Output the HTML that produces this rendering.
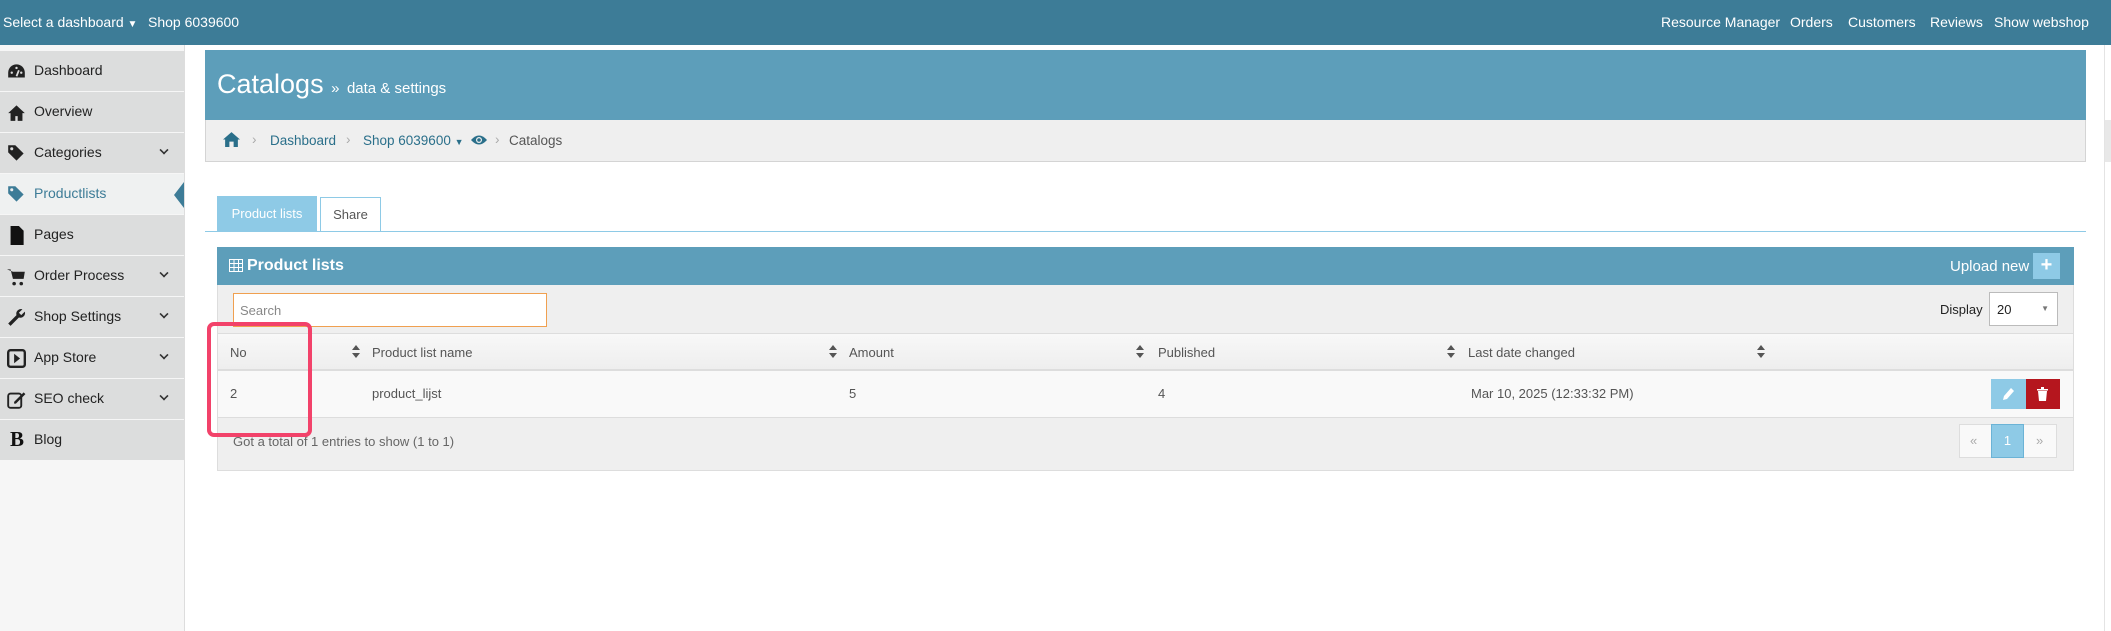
<!DOCTYPE html>
<html><head><meta charset="utf-8"><style>
*{box-sizing:border-box;margin:0;padding:0}
body{width:2111px;height:631px;overflow:hidden;background:#fff;font-family:"Liberation Sans",sans-serif;font-size:13px;color:#555;position:relative}
.abs{position:absolute}
#top{left:0;top:0;width:2111px;height:45px;background:#3d7c97;color:#fff;font-size:14px}
#top span{position:absolute;top:14px}
#side{left:0;top:45px;width:185px;height:586px;background:#f6f6f6;border-right:1px solid #ddd}
.it{position:absolute;left:0;width:184px;height:40px;background:#dcdddd;color:#222;font-size:14px}
.it .t{position:absolute;left:34px;top:11px}
.it .ic{position:absolute;left:7px;top:11px;width:19px;height:19px}
.it .ch{position:absolute;left:160px;top:13px;width:8px;height:8px;border-right:2px solid #333;border-bottom:2px solid #333;transform:rotate(45deg) scale(.8)}
.act{background:#eff1f1;color:#3d7c97}
.th{position:absolute;top:0;height:37px;line-height:37px;color:#555}
.so{position:absolute;top:12px;width:8px;height:13px}
</style></head><body>
<div id="top" class="abs">
<span style="left:3px">Select a dashboard <span style="position:static;font-size:10px">▼</span></span>
<span style="left:148px">Shop 6039600</span>
<span style="left:1661px">Resource Manager</span>
<span style="left:1790px">Orders</span>
<span style="left:1848px">Customers</span>
<span style="left:1930px">Reviews</span>
<span style="left:1994px">Show webshop</span>
</div>
<div id="side" class="abs">
<div class="it" style="top:6px"><svg class="ic" viewBox="0 0 16 16"><path d="M8 2A7 7 0 0 0 1 9v4h14V9A7 7 0 0 0 8 2z" fill="#222"/><circle cx="4" cy="9" r="1" fill="#ddd"/><circle cx="8" cy="5" r="1" fill="#ddd"/><circle cx="12" cy="9" r="1" fill="#ddd"/><path d="M8 12l2-5" stroke="#ddd" stroke-width="1.5"/></svg><span class="t">Dashboard</span></div>
<div class="it" style="top:47px"><svg class="ic" viewBox="0 0 16 16"><path d="M8 2L1 8.5h2V15h4v-4h2v4h4V8.5h2z" fill="#222"/></svg><span class="t">Overview</span></div>
<div class="it" style="top:88px"><svg class="ic" viewBox="0 0 16 16"><path d="M1 1h6l7 7-6 6-7-7z" fill="#222"/><circle cx="4" cy="4" r="1.3" fill="#ddd"/></svg><span class="t">Categories</span><i class="ch"></i></div>
<div class="it act" style="top:129px"><svg class="ic" viewBox="0 0 16 16"><path d="M1 1h6l7 7-6 6-7-7z" fill="#3d7c97"/><circle cx="4" cy="4" r="1.3" fill="#eee"/></svg><span class="t">Productlists</span><div style="position:absolute;right:0;top:8px;width:0;height:0;border-top:13px solid transparent;border-bottom:13px solid transparent;border-right:10px solid #3d7c97"></div></div>
<div class="it" style="top:170px"><svg class="ic" viewBox="0 0 16 16"><path d="M3 0h7l4 4v12H3z" fill="#111"/></svg><span class="t">Pages</span></div>
<div class="it" style="top:211px"><svg class="ic" viewBox="0 0 16 16"><path d="M0 2h3l2 8h9l1-6H5" fill="#222"/><circle cx="6" cy="14" r="1.5" fill="#222"/><circle cx="12" cy="14" r="1.5" fill="#222"/></svg><span class="t">Order Process</span><i class="ch"></i></div>
<div class="it" style="top:252px"><svg class="ic" viewBox="0 0 16 16"><path d="M15 3l-3 3-2-2 3-3a4 4 0 0 0-5 5L1 13l2 2 7-7a4 4 0 0 0 5-5z" fill="#222"/></svg><span class="t">Shop Settings</span><i class="ch"></i></div>
<div class="it" style="top:293px"><svg class="ic" viewBox="0 0 16 16"><rect x="1" y="1" width="14" height="14" rx="2" fill="none" stroke="#222" stroke-width="2"/><path d="M6 4v8l5-4z" fill="#222"/></svg><span class="t">App Store</span><i class="ch"></i></div>
<div class="it" style="top:334px"><svg class="ic" viewBox="0 0 16 16"><rect x="1" y="3" width="11" height="12" rx="2" fill="none" stroke="#222" stroke-width="1.6"/><path d="M6 10l8-8 1.5 1.5-8 8H6z" fill="#222"/></svg><span class="t">SEO check</span><i class="ch"></i></div>
<div class="it" style="top:375px"><span style="position:absolute;left:10px;top:7px;font-family:'Liberation Serif',serif;font-weight:bold;font-size:21px;color:#111">B</span><span class="t">Blog</span></div>
</div>
<!-- header -->
<div class="abs" style="left:205px;top:50px;width:1881px;height:70px;background:#5d9eba;color:#fff">
<span class="abs" style="left:12px;top:19px;font-size:27px">Catalogs <span style="font-size:15px">»</span> <span style="font-size:15px">data &amp; settings</span></span>
</div>
<div class="abs" style="left:205px;top:120px;width:1881px;height:42px;background:#efefef;border:1px solid #d4d4d4;border-top:none;color:#2a6f8a;font-size:13.5px">
<svg class="abs" style="left:17px;top:12px" width="17" height="15" viewBox="0 0 16 14"><path d="M8 0L0 7h2v7h4V9h4v5h4V7h2z" fill="#2a6f8a"/></svg>
<span class="abs" style="left:46px;top:12px;color:#aaa">›</span>
<span class="abs" style="left:64px;top:13px">Dashboard</span>
<span class="abs" style="left:140px;top:12px;color:#aaa">›</span>
<span class="abs" style="left:157px;top:13px">Shop 6039600 <span style="font-size:9px">▼</span></span>
<svg class="abs" style="left:265px;top:14px" width="16" height="12" viewBox="0 0 16 12"><path d="M0 6Q8-3 16 6Q8 15 0 6z" fill="#2a6f8a"/><circle cx="8" cy="6" r="3" fill="#efefef"/><circle cx="8" cy="6" r="1.8" fill="#2a6f8a"/></svg>
<span class="abs" style="left:289px;top:12px;color:#aaa">›</span>
<span class="abs" style="left:303px;top:13px;color:#555">Catalogs</span>
</div>
<!-- tabs -->
<div class="abs" style="left:217px;top:196px;width:100px;height:35px;background:#8ecae6;color:#fff;text-align:center;line-height:35px">Product lists</div>
<div class="abs" style="left:320px;top:197px;width:61px;height:35px;background:#fff;border:1px solid #8ecae6;border-bottom:none;text-align:center;line-height:33px">Share</div>
<div class="abs" style="left:205px;top:231px;width:1881px;height:1px;background:#8ecae6"></div>
<!-- panel -->
<div class="abs" style="left:217px;top:247px;width:1857px;height:224px;background:#efefef;border:1px solid #ddd;border-top:none"></div>
<div class="abs" style="left:217px;top:247px;width:1857px;height:38px;background:#5d9eba;color:#fff">
<svg class="abs" style="left:12px;top:12px" width="14" height="13" viewBox="0 0 14 13"><rect x=".5" y=".5" width="13" height="12" fill="none" stroke="#fff"/><path d="M.5 4.5h13M.5 8.5h13M5 .5v12M9.5 .5v12" stroke="#fff"/></svg>
<span class="abs" style="left:30px;top:10px;font-size:16px;font-weight:bold">Product lists</span>
<span class="abs" style="left:1733px;top:11px;font-size:15px">Upload new</span>
<div class="abs" style="left:1816px;top:6px;width:27px;height:26px;background:#8ecae6;color:#fff;font-weight:bold;font-size:20px;text-align:center;line-height:25px">+</div>
</div>
<div class="abs" style="left:233px;top:293px;width:314px;height:34px;background:#fff;border:1px solid #f0a050;padding:9px 6px;color:#888">Search</div>
<span class="abs" style="left:1940px;top:302px;color:#222">Display</span>
<div class="abs" style="left:1989px;top:292px;width:69px;height:34px;background:#fff;border:1px solid #bbb;padding:9px 7px;color:#222">20<span style="position:absolute;right:8px;top:11px;font-size:8px;color:#777">▼</span></div>
<!-- table head -->
<div class="abs" style="left:218px;top:333px;width:1855px;height:38px;background:linear-gradient(#f8f8f8,#eee);border-top:1px solid #ddd;border-bottom:2px solid #ddd">
<span class="th" style="left:12px">No</span>
<span class="th" style="left:154px">Product list name</span>
<span class="th" style="left:631px">Amount</span>
<span class="th" style="left:940px">Published</span>
<span class="th" style="left:1250px">Last date changed</span>
</div>
<svg class="abs so" style="left:352px;top:345px" viewBox="0 0 8 13"><path d="M4 0l4 5H0zM4 13l4-5H0z" fill="#555"/></svg>
<svg class="abs so" style="left:829px;top:345px" viewBox="0 0 8 13"><path d="M4 0l4 5H0zM4 13l4-5H0z" fill="#555"/></svg>
<svg class="abs so" style="left:1136px;top:345px" viewBox="0 0 8 13"><path d="M4 0l4 5H0zM4 13l4-5H0z" fill="#555"/></svg>
<svg class="abs so" style="left:1447px;top:345px" viewBox="0 0 8 13"><path d="M4 0l4 5H0zM4 13l4-5H0z" fill="#555"/></svg>
<svg class="abs so" style="left:1757px;top:345px" viewBox="0 0 8 13"><path d="M4 0l4 5H0zM4 13l4-5H0z" fill="#555"/></svg>
<!-- row -->
<div class="abs" style="left:218px;top:371px;width:1855px;height:47px;background:#f9f9f9;border-bottom:1px solid #ddd;line-height:46px;color:#555">
<span class="abs" style="left:12px">2</span>
<span class="abs" style="left:154px">product_lijst</span>
<span class="abs" style="left:631px">5</span>
<span class="abs" style="left:940px">4</span>
<span class="abs" style="left:1253px">Mar 10, 2025 (12:33:32 PM)</span>
</div>
<div class="abs" style="left:1991px;top:379px;width:35px;height:30px;background:#8ecae6"><svg class="abs" style="left:11px;top:8px" width="13" height="14" viewBox="0 0 13 14"><path d="M9 1l3 3-7 8-4 1 1-4z" fill="#fff"/></svg></div>
<div class="abs" style="left:2026px;top:379px;width:34px;height:30px;background:#b5161e"><svg class="abs" style="left:11px;top:8px" width="11" height="14" viewBox="0 0 11 14"><path d="M0 2h11v1.5H0zM4 0h3v2H4zM1 4h9l-1 10H2z" fill="#fff"/></svg></div>
<!-- footer -->
<span class="abs" style="left:233px;top:434px;color:#666">Got a total of 1 entries to show (1 to 1)</span>
<div class="abs" style="left:1959px;top:424px;width:98px;height:34px;background:#f9f9f9;border:1px solid #ddd"></div>
<span class="abs" style="left:1970px;top:433px;color:#aaa">«</span>
<div class="abs" style="left:1991px;top:424px;width:33px;height:34px;background:#8ecae6;border:1px solid #6bb3d6;color:#fff;text-align:center;line-height:32px">1</div>
<span class="abs" style="left:2036px;top:433px;color:#aaa">»</span>
<!-- highlight -->
<div class="abs" style="left:207px;top:322px;width:105px;height:115px;border:4px solid #f2426a;border-radius:7px"></div>
<div class="abs" style="left:2104px;top:45px;width:1px;height:586px;background:#e4e4e4"></div>
<div class="abs" style="left:2105px;top:120px;width:6px;height:42px;background:#e8e8e8"></div>
</body></html>
